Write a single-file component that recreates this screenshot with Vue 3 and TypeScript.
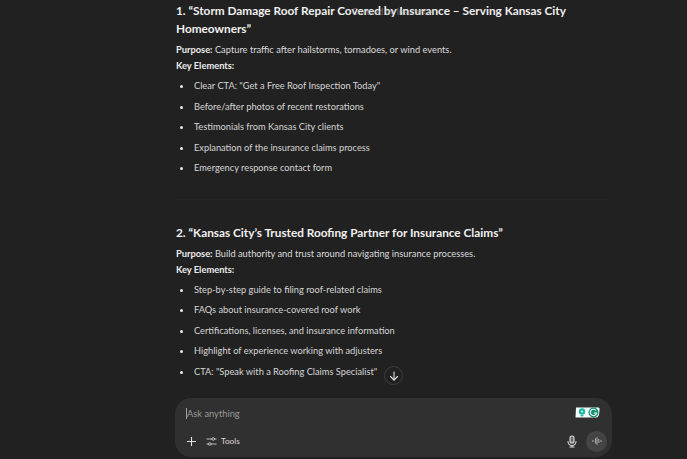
<script setup lang="ts">
interface Section {
  title: string[]
  purpose: string
  items: string[]
}

const sections: Section[] = [
  {
    title: ['1. “Storm Damage Roof Repair Covered by Insurance – Serving Kansas City', 'Homeowners”'],
    purpose: 'Capture traffic after hailstorms, tornadoes, or wind events.',
    items: [
      'Clear CTA: "Get a Free Roof Inspection Today"',
      'Before/after photos of recent restorations',
      'Testimonials from Kansas City clients',
      'Explanation of the insurance claims process',
      'Emergency response contact form',
    ],
  },
  {
    title: ['2. “Kansas City’s Trusted Roofing Partner for Insurance Claims”'],
    purpose: 'Build authority and trust around navigating insurance processes.',
    items: [
      'Step-by-step guide to filing roof-related claims',
      'FAQs about insurance-covered roof work',
      'Certifications, licenses, and insurance information',
      'Highlight of experience working with adjusters',
      'CTA: "Speak with a Roofing Claims Specialist"',
    ],
  },
]
</script>

<template>
  <div class="page">
    <main class="thread">
      <template v-for="(s, i) in sections" :key="i">
        <hr v-if="i > 0" class="rule" />
        <section class="block">
          <h3 class="title">
            <span v-for="line in s.title" :key="line" class="title-line">{{ line }}</span>
          </h3>
          <p class="meta"><b>Purpose:</b> {{ s.purpose }}</p>
          <p class="meta"><b>Key Elements:</b></p>
          <ul class="list">
            <li v-for="item in s.items" :key="item">{{ item }}</li>
          </ul>
        </section>
      </template>
    </main>

    <!-- faint floating label that sits over the first heading -->
    <span class="ghost">Covered by Insurance</span>

    <button type="button" class="scroll-down" aria-label="Scroll down">
      <svg width="12" height="12" viewBox="0 0 24 24" fill="none" stroke="currentColor" stroke-width="2.2" stroke-linecap="round" stroke-linejoin="round">
        <path d="M12 4v16" />
        <path d="m5 13 7 7 7-7" />
      </svg>
    </button>

    <div class="composer">
      <div class="input-row">
        <span class="caret"></span>
        <span class="placeholder">Ask anything</span>
        <span class="ext">
          <svg width="25" height="11" viewBox="0 0 25 11">
            <path d="M1 0.5H23.5Q25 0.5 24.5 3L24 8Q23 10.5 21 10.5H0.5Z" fill="#fff" />
            <circle cx="7" cy="4.5" r="3.2" fill="#19b8a0" />
            <circle cx="7" cy="4.5" r="1" fill="#fff" />
            <rect x="5.6" y="8" width="2.8" height="1.4" fill="#19b8a0" />
            <circle cx="18.5" cy="5.5" r="5" fill="#0f8f72" />
            <path d="M21 3.5A3.2 3.2 0 1 0 21.6 6H18.8" fill="none" stroke="#fff" stroke-width="1.1" />
          </svg>
        </span>
      </div>
      <div class="tool-row">
        <svg class="plus" width="11" height="11" viewBox="0 0 11 11" fill="none" stroke="#e3e3e3" stroke-width="1.1">
          <path d="M5.5 1v9M1 5.5h9" />
        </svg>
        <svg class="sliders" width="11" height="11" viewBox="0 0 11 11" fill="none" stroke="#d0d0d0" stroke-width="0.9">
          <path d="M0.5 3h5.5M8.5 3h2M0.5 8h2M5 8h5.5" />
          <circle cx="7.2" cy="3" r="1.3" />
          <circle cx="3.8" cy="8" r="1.3" />
        </svg>
        <span class="tools">Tools</span>
        <svg class="mic" width="10" height="13" viewBox="0 0 10 13" fill="none" stroke="#dcdcdc" stroke-width="1.1" stroke-linecap="round">
          <rect x="3" y="1" width="4" height="7" rx="2" fill="#dcdcdc" fill-opacity="0.35" />
          <path d="M1 6.5a4 4 0 0 0 8 0M5 10.5V12M3 12h4" />
        </svg>
        <span class="voice">
          <svg width="10" height="8" viewBox="0 0 10 8" fill="none" stroke="#b8b8b8" stroke-width="0.9" stroke-linecap="round">
            <path d="M1 3.3v1.4M3.5 1.8v4.4M5 0.6v6.8M6.8 2.4v3.2M9 3.4v1.2" />
          </svg>
        </span>
      </div>
    </div>
  </div>
</template>

<style>
html,
body {
  margin: 0;
  background: #212121;
}
</style>

<style scoped>
.page {
  position: relative;
  width: 687px;
  height: 459px;
  overflow: hidden;
  box-sizing: border-box;
  background: #212121;
  color: #ececec;
  font-family: Lato, sans-serif;
}

.thread {
  width: 434px;
  margin-left: 176px;
}

.title {
  margin: 0;
  padding-top: 2px;
  font-size: 11.8px;
  font-weight: 700;
  line-height: 18px;
  color: #f0f0f0;
  white-space: nowrap;
}

.title-line {
  display: block;
}

.meta {
  margin: 0;
  font-size: 9.3px;
  line-height: 16px;
  color: #dcdcdc;
}

.title + .meta {
  margin-top: 4px;
}

.meta b {
  font-weight: 700;
  color: #ececec;
}

.list {
  margin: 2px 0 0;
  padding: 0 0 0 18px;
  list-style: none;
  font-size: 9.25px;
  line-height: 20.5px;
  color: #d6d6d6;
}

.list li {
  position: relative;
}

.list li::before {
  content: "";
  position: absolute;
  left: -14px;
  top: 9px;
  width: 3px;
  height: 3px;
  border-radius: 50%;
  background: #e8e8e8;
}

.rule {
  margin: 20px 0 22px;
  border: 0;
  border-top: 1px solid #262626;
}

.ghost {
  position: absolute;
  left: 352px;
  top: 6px;
  font-size: 8.5px;
  line-height: 12px;
  color: rgba(170, 170, 170, 0.55);
}

.scroll-down {
  position: absolute;
  left: 384px;
  top: 366px;
  display: flex;
  align-items: center;
  justify-content: center;
  width: 19px;
  height: 19px;
  padding: 0;
  border: 1px solid #3d3d3d;
  border-radius: 50%;
  background: #212121;
  color: #e0e0e0;
}

.composer {
  position: absolute;
  left: 175px;
  top: 398px;
  width: 437px;
  height: 59px;
  box-sizing: border-box;
  padding: 0 5px 0 11px;
  border-radius: 16px;
  background: #303030;
}

.input-row {
  display: flex;
  align-items: center;
  height: 31px;
  padding-right: 7px;
}

.caret {
  width: 1px;
  height: 11px;
  background: #a0a0a0;
}

.placeholder {
  font-size: 9.3px;
  color: #9a9a9a;
}

.ext {
  display: flex;
  margin-left: auto;
  margin-top: -2px;
}

.tool-row {
  display: flex;
  align-items: center;
  height: 24px;
}

.plus {
  margin-right: 9px;
}

.tools {
  margin-left: 4px;
  font-size: 8.3px;
  color: #d6d6d6;
}

.mic {
  margin-left: auto;
  margin-right: 9px;
}

.voice {
  display: flex;
  align-items: center;
  justify-content: center;
  width: 21px;
  height: 21px;
  border-radius: 50%;
  background: #444444;
}
</style>
